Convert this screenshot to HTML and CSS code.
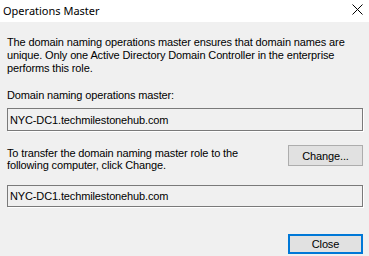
FILE: index.html
```html
<!DOCTYPE html>
<html lang="en">

<head>
    <meta charset="UTF-8">
    <title>Operations Master</title>
    <link rel="stylesheet" href="styles.css">
</head>

<body>
    <div class="window">
        <div class="titlebar">
            <span class="title">Operations Master</span>
            <span class="close-x">
                <svg width="11" height="11" viewBox="0 0 11 11">
                    <path d="M0.5 0.5 L10.5 10.5 M10.5 0.5 L0.5 10.5" stroke="#000" stroke-width="1" fill="none" />
                </svg>
            </span>
        </div>

        <div class="content">
            <p class="intro">The domain naming operations master ensures that domain names are<br>
                unique. Only one Active Directory Domain Controller in the enterprise<br>
                performs this role.</p>

            <label class="field-label">Domain naming operations master:</label>
            <div class="textbox">NYC-DC1.techmilestonehub.com</div>

            <div class="transfer-row">
                <p class="transfer-text">To transfer the domain naming master role to the<br>
                    following computer, click Change.</p>
                <button class="btn">Change...</button>
            </div>

            <div class="textbox textbox-2">NYC-DC1.techmilestonehub.com</div>

            <div class="footer">
                <button class="btn btn-default">Close</button>
            </div>
        </div>
    </div>
</body>

</html>
```

FILE: styles.css
```css
body {
    margin: 0;
    padding: 0;
    background-color: #f0f0f0;
    font-family: "Liberation Sans", Arial, sans-serif;
    font-size: 11px;
    letter-spacing: -0.13px;
    color: #000;
}

.window {
    width: 369px;
    height: 256px;
    display: flex;
    flex-direction: column;
}

.titlebar {
    height: 22px;
    background-color: #fff;
    display: flex;
    align-items: center;
    justify-content: space-between;
    padding: 0 6px 0 3px;
}

.title {
    font-family: "Noto Sans", sans-serif;
    font-size: 11px;
    letter-spacing: 0;
    margin-top: -2px;
}

.close-x {
    display: flex;
    margin-top: -3px;
}

.content {
    flex-grow: 1;
    padding: 14px 6px 0 7px;
    display: flex;
    flex-direction: column;
}

.intro {
    margin: 0;
    line-height: 13px;
}

.field-label {
    display: block;
    margin-top: 14px;
    line-height: 13px;
}

.textbox {
    margin-top: 6px;
    height: 23px;
    border: 1px solid #7a7a7a;
    box-shadow: 1px 1px 0 #fff;
    display: flex;
    align-items: center;
    padding-left: 2px;
    box-sizing: border-box;
}

.transfer-row {
    display: flex;
    justify-content: space-between;
    align-items: flex-start;
    margin-top: 14px;
}

.transfer-text {
    margin: 2px 0 0;
    line-height: 12px;
}

.btn {
    width: 75px;
    height: 21px;
    background-color: #e1e1e1;
    border: 1px solid #adadad;
    font-family: "Liberation Sans", Arial, sans-serif;
    font-size: 11px;
    letter-spacing: -0.13px;
    color: #000;
    padding: 0;
}

.textbox-2 {
    margin-top: 14px;
    height: 22px;
}

.footer {
    margin-top: auto;
    display: flex;
    justify-content: flex-end;
    padding-bottom: 2px;
}

.btn-default {
    border: 2px solid #0078d7;
    height: 20px;
}
```
